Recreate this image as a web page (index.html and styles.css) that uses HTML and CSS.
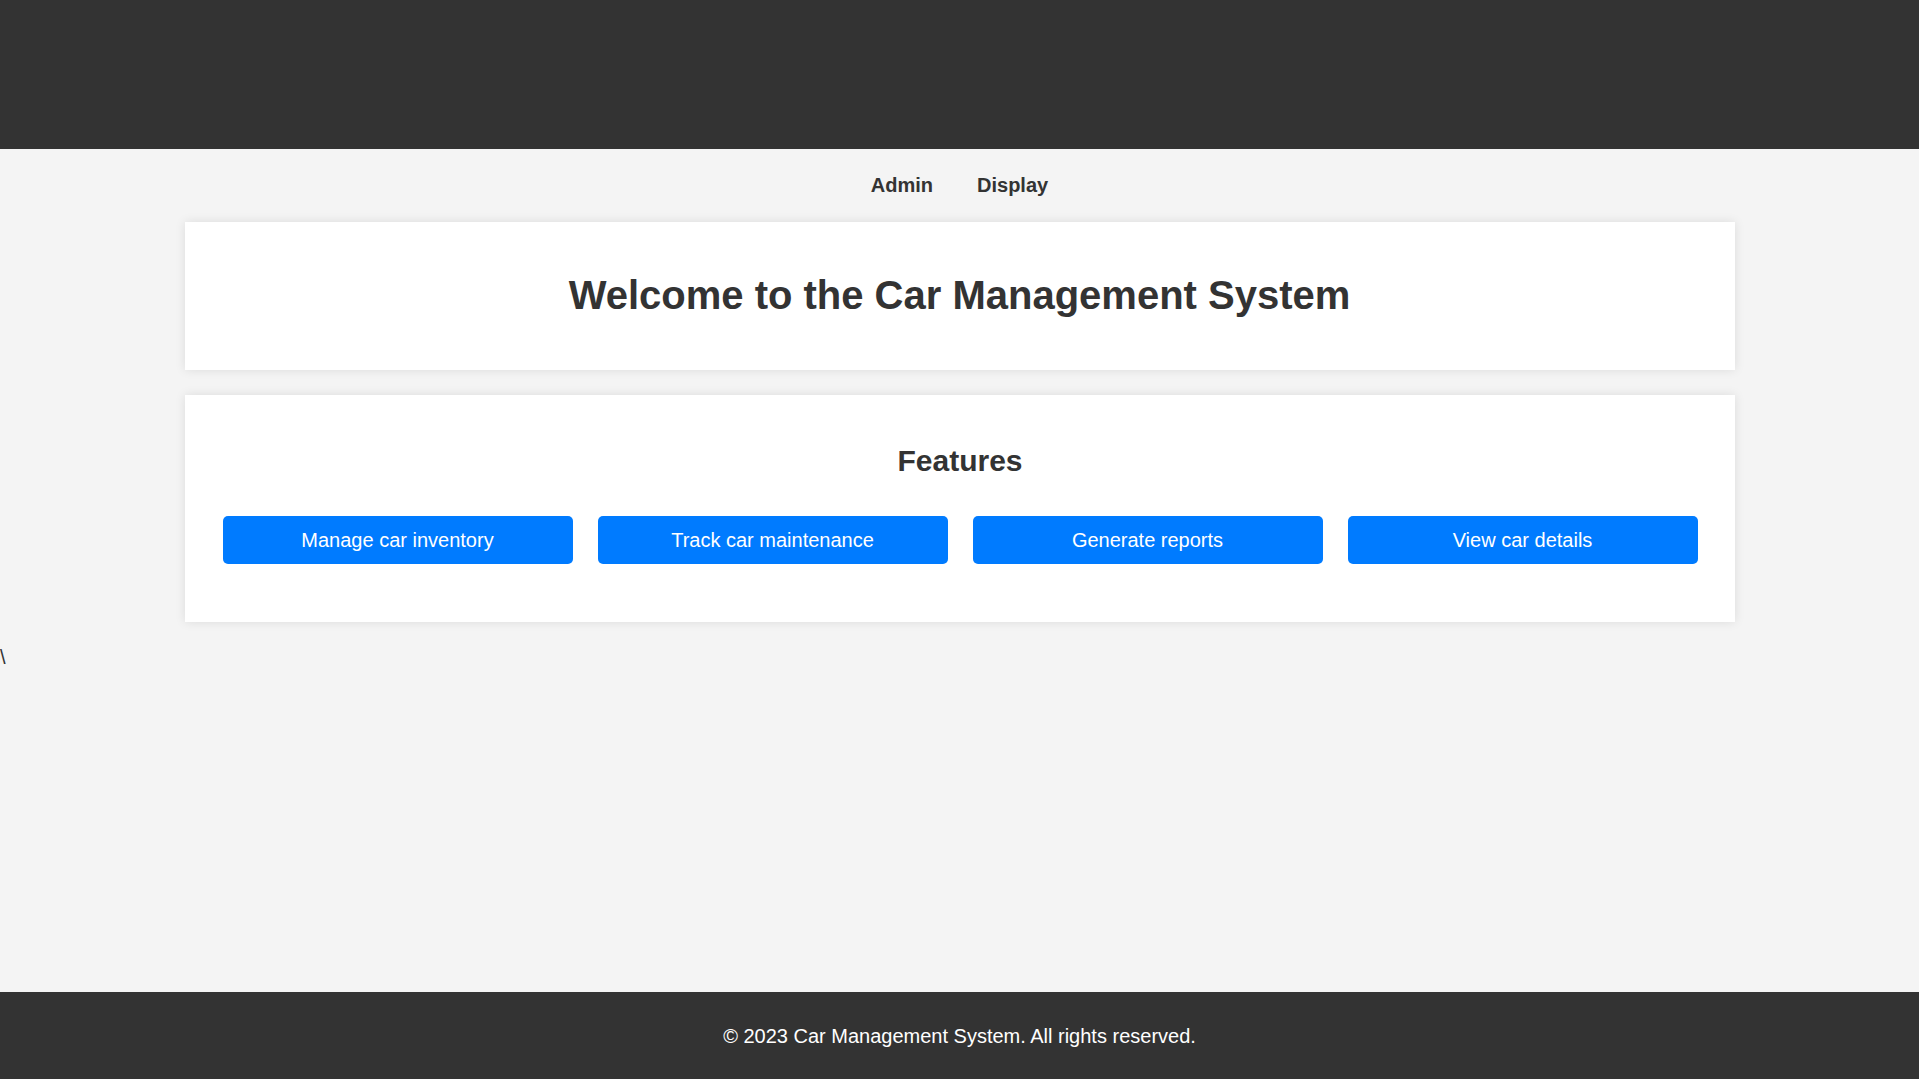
FILE: index.html
```html
<!DOCTYPE html>
<html lang="en">
<head>
<meta charset="utf-8">
<title>Car Management System</title>
<link rel="stylesheet" href="styles.css">
</head>
<body>
<div class="page">
  <header class="site-header"></header>
  <nav class="site-nav">
    <a href="#" class="nav-link">Admin</a>
    <a href="#" class="nav-link">Display</a>
  </nav>
  <main class="main">
    <section class="card card-welcome">
      <h1 class="title">Welcome to the Car Management System</h1>
    </section>
    <section class="card card-features">
      <h2 class="subtitle">Features</h2>
      <div class="feature-grid">
        <button class="feature-btn">Manage car inventory</button>
        <button class="feature-btn">Track car maintenance</button>
        <button class="feature-btn">Generate reports</button>
        <button class="feature-btn">View car details</button>
      </div>
    </section>
    <div class="stray">\</div>
  </main>
  <footer class="site-footer">
    <p class="footer-text">&copy; 2023 Car Management System. All rights reserved.</p>
  </footer>
</div>
</body>
</html>
```
FILE: styles.css
```css
* { box-sizing: border-box; }
html, body {
  margin: 0;
  padding: 0;
}
body {
  font-family: "Liberation Sans", Arial, sans-serif;
  font-size: 20px;
  color: #333;
  background: #f4f4f4;
}
.page {
  min-height: 100vh;
  display: flex;
  flex-direction: column;
}
.site-header {
  height: 149px;
  background: #333;
}
.site-nav {
  height: 73px;
  display: flex;
  justify-content: center;
  align-items: center;
  gap: 44px;
}
.nav-link {
  color: #333;
  font-weight: bold;
  text-decoration: none;
  font-size: 20px;
}
.main {
  flex: 1;
  display: flex;
  flex-direction: column;
}
.card {
  width: 1550px;
  margin: 0 auto;
  background: #fff;
  box-shadow: 0 0 10px rgba(0, 0, 0, 0.1);
}
.card-welcome {
  height: 148px;
  padding-bottom: 2px;
  display: flex;
  align-items: center;
  justify-content: center;
}
.title {
  margin: 0;
  font-size: 40px;
  font-weight: bold;
  line-height: 46px;
  text-align: center;
}
.card-features {
  margin-top: 25px;
  height: 227px;
  padding: 49px 37px 0 38px;
}
.subtitle {
  margin: 0;
  font-size: 30px;
  line-height: 34px;
  text-align: center;
}
.feature-grid {
  margin-top: 38px;
  display: grid;
  grid-template-columns: repeat(4, 1fr);
  gap: 25px;
}
.feature-btn {
  height: 48px;
  border: none;
  border-radius: 5px;
  background: #007bff;
  color: #fff;
  font-family: "Liberation Sans", Arial, sans-serif;
  font-size: 20px;
  cursor: pointer;
}
.stray {
  margin-top: 24px;
  font-size: 20px;
  line-height: 23px;
}
.site-footer {
  height: 87px;
  background: #333;
  color: #fff;
  display: flex;
  align-items: center;
  justify-content: center;
}
.footer-text {
  margin: 0;
  font-size: 20px;
  padding-top: 2px;
}
```
